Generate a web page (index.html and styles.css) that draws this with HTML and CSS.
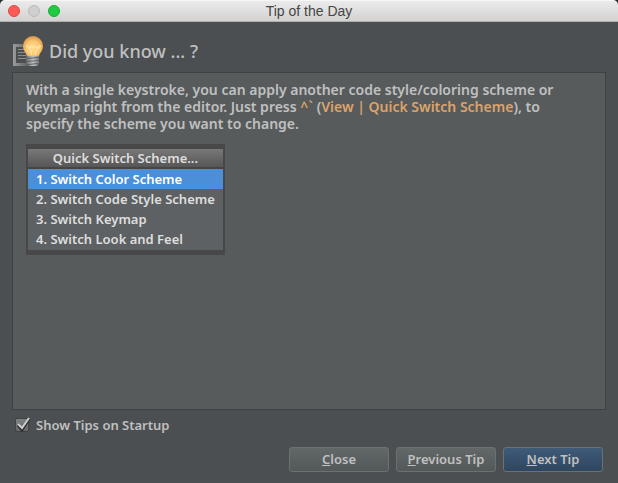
FILE: index.html
```html
<!DOCTYPE html>
<html lang="en">
<head>
<meta charset="utf-8">
<title>Tip of the Day</title>
<link rel="stylesheet" href="styles.css">
</head>
<body>
<div class="window">
  <header class="titlebar">
    <div class="lights">
      <button class="light light-close" type="button" aria-label="Close window"></button>
      <button class="light light-minimize" type="button" aria-label="Minimize" disabled></button>
      <button class="light light-zoom" type="button" aria-label="Zoom"></button>
    </div>
    <span class="title">Tip of the Day</span>
  </header>
  <main class="content">
    <div class="heading">
      <svg class="tip-icon" viewBox="0 0 32 32" aria-hidden="true">
        <defs>
          <linearGradient id="page" x1="0" y1="0" x2="1" y2="0"><stop offset="0" stop-color="#9b9b9b"/><stop offset="1" stop-color="#606263"/></linearGradient>
          <radialGradient id="bulb" cx=".5" cy=".6" r=".58"><stop offset="0" stop-color="#ffdc8c"/><stop offset=".6" stop-color="#fbc871"/><stop offset="1" stop-color="#dd9549"/></radialGradient>
          <linearGradient id="base" x1="0" y1="0" x2="1" y2="0"><stop offset="0" stop-color="#77797a"/><stop offset=".5" stop-color="#c4c5c5"/><stop offset="1" stop-color="#7a7c7d"/></linearGradient>
        </defs>
        <path fill="url(#page)" fill-rule="evenodd" d="M1 9h15v22H1zM4 12v16h10V12z"/>
        <path stroke="#8a8c8d" d="M6 14.500h6M6 17.500h7M6 20.500h8M6 23.500h8"/>
        <path fill="url(#bulb)" d="M21 1a10 10 0 0 0-10 10c0 5 3 6 4 10h12c1-4 4-5 4-10A10 10 0 0 0 21 1z"/>
        <path fill="none" stroke="#ffeebb" d="M19.500 20c0-4-1-5-3-7-1-1-2-1-2-2s2-1 2.500 1 2 1.500 2-.5 1-1.500 2 0 2-1.500 2.500 0 2 2 2.500.5 2.500-2 2.500-1-1 1-2 2c-2 2-3 3-3 7"/>
        <path fill="url(#base)" d="M15 21h12v7l-2 3h-8l-2-3z"/>
        <path stroke="#5c5f61" d="M15 23.500l12-1M15 26.500l12-1M16 29.500l10-1"/>
      </svg>
      <h1>Did you know ... ?</h1>
    </div>
    <section class="tip">
      <p>With a single keystroke, you can apply another code style/coloring scheme or keymap right from the editor. Just press <span class="key">^`</span> (<span class="key">View | Quick Switch Scheme</span>), to specify the scheme you want to change.</p>
      <div class="popup">
        <div class="popup-title">Quick Switch Scheme...</div>
        <ul class="popup-list">
          <li class="selected">1. Switch Color Scheme</li>
          <li>2. Switch Code Style Scheme</li>
          <li>3. Switch Keymap</li>
          <li>4. Switch Look and Feel</li>
        </ul>
      </div>
    </section>
    <label class="startup">
      <span class="check">
        <input type="checkbox" checked>
        <svg class="tick" viewBox="0 0 16 16" aria-hidden="true"><path d="M3 8l4 5 7-11" stroke="#303233" stroke-width="3"/><path d="M3 7l4 4 7-10" stroke="#d0d1d1" stroke-width="2"/></svg>
      </span>
      <span>Show Tips on Startup</span>
    </label>
    <footer class="actions">
      <button type="button"><u>C</u>lose</button>
      <button type="button"><u>P</u>revious Tip</button>
      <button class="primary" type="button"><u>N</u>ext Tip</button>
    </footer>
  </main>
</div>
</body>
</html>
```
FILE: styles.css
```css
* { box-sizing: border-box; }

body {
  margin: 0;
  background: #24282b;
  color: #c0c0c0;
  font: 500 13px/20px "Noto Sans", "Lucida Grande", sans-serif;
}

.window {
  display: flex;
  flex-direction: column;
  min-height: 100vh;
  background: #4b4f51;
  border-radius: 5px 5px 0 0;
  overflow: hidden;
}

.titlebar {
  display: grid;
  grid-template-columns: 1fr auto 1fr;
  align-items: center;
  height: 22px;
  padding: 0 8px;
  background: linear-gradient(#ebebeb, #d2d2d2);
  border-top: 1px solid #f6f6f6;
  border-bottom: 1px solid #b0b0b0;
  color: #454545;
  font: 14px/20px "Liberation Sans", Arial, sans-serif;
}

.lights { display: flex; gap: 8px; }

.light {
  width: 12px;
  height: 12px;
  padding: 0;
  border: 1px solid;
  border-radius: 50%;
}

.light-close { background: #ff5b55; border-color: #e2453f; }
.light-minimize { background: #cfcfcf; border-color: #b9b9b9; }
.light-zoom { background: #21cb41; border-color: #14ae30; }

.content {
  display: flex;
  flex: 1;
  flex-direction: column;
  padding: 13px 12px 11px;
}

.heading {
  display: flex;
  align-items: center;
  gap: 5px;
  margin-bottom: 5px;
}

.tip-icon { width: 32px; height: 32px; }

h1 {
  margin: 0;
  font-size: 18px;
  font-weight: 500;
  line-height: 28px;
}

.tip {
  flex: 1;
  padding: 8px 13px;
  background: #575b5c;
  border: 1px solid #3f4243;
}

.tip p {
  max-width: 550px;
  margin: 0 0 12px;
  font-size: 14px;
  font-weight: 600;
  line-height: 17px;
}

.key { color: #dda36b; }

.popup {
  width: fit-content;
  padding: 5px 2px;
  background: #484848;
  color: #dedede;
  font-weight: 600;
}

.popup-title {
  height: 20px;
  background: linear-gradient(#787878, #565656);
  border-bottom: 2px solid #454545;
  line-height: 19px;
  text-align: center;
}

.popup-list {
  margin: 0;
  padding: 0 0 1px;
  background: #5d6163;
  list-style: none;
}

.popup-list li { padding: 0 8px; }
.popup-list .selected { background: #4b8fd8; color: #fff; }

.startup {
  display: flex;
  align-items: center;
  align-self: flex-start;
  gap: 5px;
  margin: 5px 0 12px 3px;
  font-weight: 600;
}

.check {
  position: relative;
  width: 16px;
  height: 16px;
}

.check input {
  display: block;
  width: 14px;
  height: 14px;
  margin: 1px 0;
  appearance: none;
  background: linear-gradient(#808384, #66696a);
  border: 1px solid #414344;
  border-radius: 2px;
}

.tick {
  position: absolute;
  inset: 0;
  fill: none;
  pointer-events: none;
}

.check input:not(:checked) + .tick { display: none; }

.actions {
  display: flex;
  justify-content: flex-end;
  gap: 7px;
  padding-right: 3px;
}

.actions button {
  width: 100px;
  height: 25px;
  padding: 0 0 1px;
  background: linear-gradient(#626768, #53585a);
  border: 1px solid #6b7071;
  border-radius: 3px;
  color: inherit;
  font: inherit;
  font-weight: 600;
}

.actions .primary { background: linear-gradient(#3e5b78, #30465f); }
```
